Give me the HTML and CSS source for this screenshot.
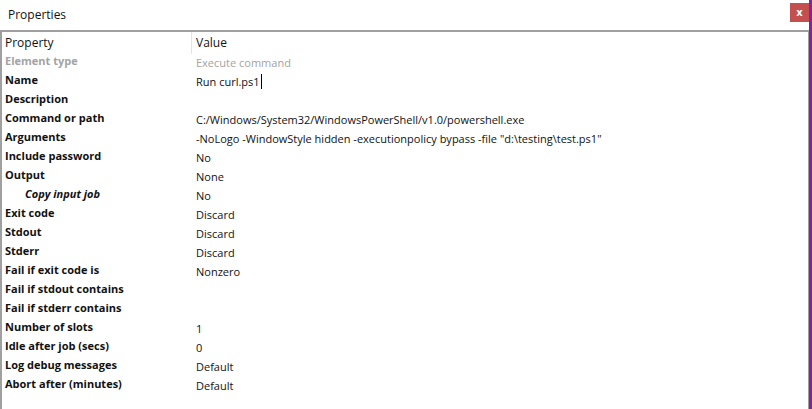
FILE: index.html
```html
<!DOCTYPE html>
<html lang="en">
  <head>
    <meta charset="UTF-8" />
    <title>Properties</title>
    <link rel="stylesheet" href="styles.css">
  </head>
  <body>
    <div class="window">
      <div class="titlebar">
        <span class="title">Properties</span>
        <button class="close">x</button>
      </div>
      <div class="grid">
        <div class="head name">Property</div>
        <div class="head value">Value</div>

        <div class="name muted">Element type</div>
        <div class="value muted">Execute command</div>

        <div class="name">Name</div>
        <div class="value">Run curl.ps1<span class="caret"></span></div>

        <div class="name">Description</div>
        <div class="value"></div>

        <div class="name">Command or path</div>
        <div class="value">C:/Windows/System32/WindowsPowerShell/v1.0/powershell.exe</div>

        <div class="name">Arguments</div>
        <div class="value">-NoLogo -WindowStyle hidden -executionpolicy bypass -file "d:\testing\test.ps1"</div>

        <div class="name">Include password</div>
        <div class="value">No</div>

        <div class="name">Output</div>
        <div class="value">None</div>

        <div class="name sub">Copy input job</div>
        <div class="value">No</div>

        <div class="name">Exit code</div>
        <div class="value">Discard</div>

        <div class="name">Stdout</div>
        <div class="value">Discard</div>

        <div class="name">Stderr</div>
        <div class="value">Discard</div>

        <div class="name">Fail if exit code is</div>
        <div class="value">Nonzero</div>

        <div class="name">Fail if stdout contains</div>
        <div class="value"></div>

        <div class="name">Fail if stderr contains</div>
        <div class="value"></div>

        <div class="name">Number of slots</div>
        <div class="value">1</div>

        <div class="name">Idle after job (secs)</div>
        <div class="value">0</div>

        <div class="name">Log debug messages</div>
        <div class="value">Default</div>

        <div class="name">Abort after (minutes)</div>
        <div class="value">Default</div>
      </div>
    </div>
  </body>
</html>
```
FILE: styles.css
```css
html,
body {
  margin: 0;
  padding: 0;
  height: 100%;
  background: #fff;
}
body {
  font-family: "Open Sans", "Noto Sans", sans-serif;
  font-size: 11px;
  color: #111;
}
.window {
  height: 100%;
  display: flex;
  flex-direction: column;
  border-right: 3px solid #8b1fa3;
  box-sizing: border-box;
}
.titlebar {
  height: 30px;
  display: flex;
  align-items: center;
  justify-content: space-between;
  padding: 0 0 0 8px;
  box-sizing: border-box;
}
.title {
  font-size: 12px;
  margin-top: -2px;
}
.close {
  width: 19px;
  height: 19px;
  margin-top: -5px;
  padding: 0;
  border: none;
  background-color: #c44f4f;
  color: #fff;
  font-family: "DejaVu Sans", sans-serif;
  font-weight: bold;
  font-size: 10px;
  line-height: 17px;
}
.grid {
  flex: 1;
  display: grid;
  grid-template-columns: 190px 1fr;
  grid-auto-rows: 19px;
  align-content: start;
  border-top: 2px solid #a0a0a0;
  border-left: 2px solid #a0a0a0;
  border-right: 1px solid #a0a0a0;
}
.name {
  padding-left: 3px;
  padding-top: 1px;
  font-weight: bold;
  line-height: 17px;
  white-space: nowrap;
}
.value {
  padding-left: 4px;
  padding-top: 3px;
  line-height: 17px;
  white-space: nowrap;
}
.head.name,
.head.value {
  height: 22px;
  padding-top: 0;
  font-size: 12px;
  font-weight: normal;
  line-height: 21px;
}
.head.name {
  border-right: 1px solid #e4e4e4;
}
.muted {
  color: #a3a3a3;
}
.sub {
  padding-left: 23px;
  font-style: italic;
}
.caret {
  display: inline-block;
  width: 1px;
  height: 15px;
  margin-left: 1px;
  vertical-align: -3px;
  background: #000;
}
```
